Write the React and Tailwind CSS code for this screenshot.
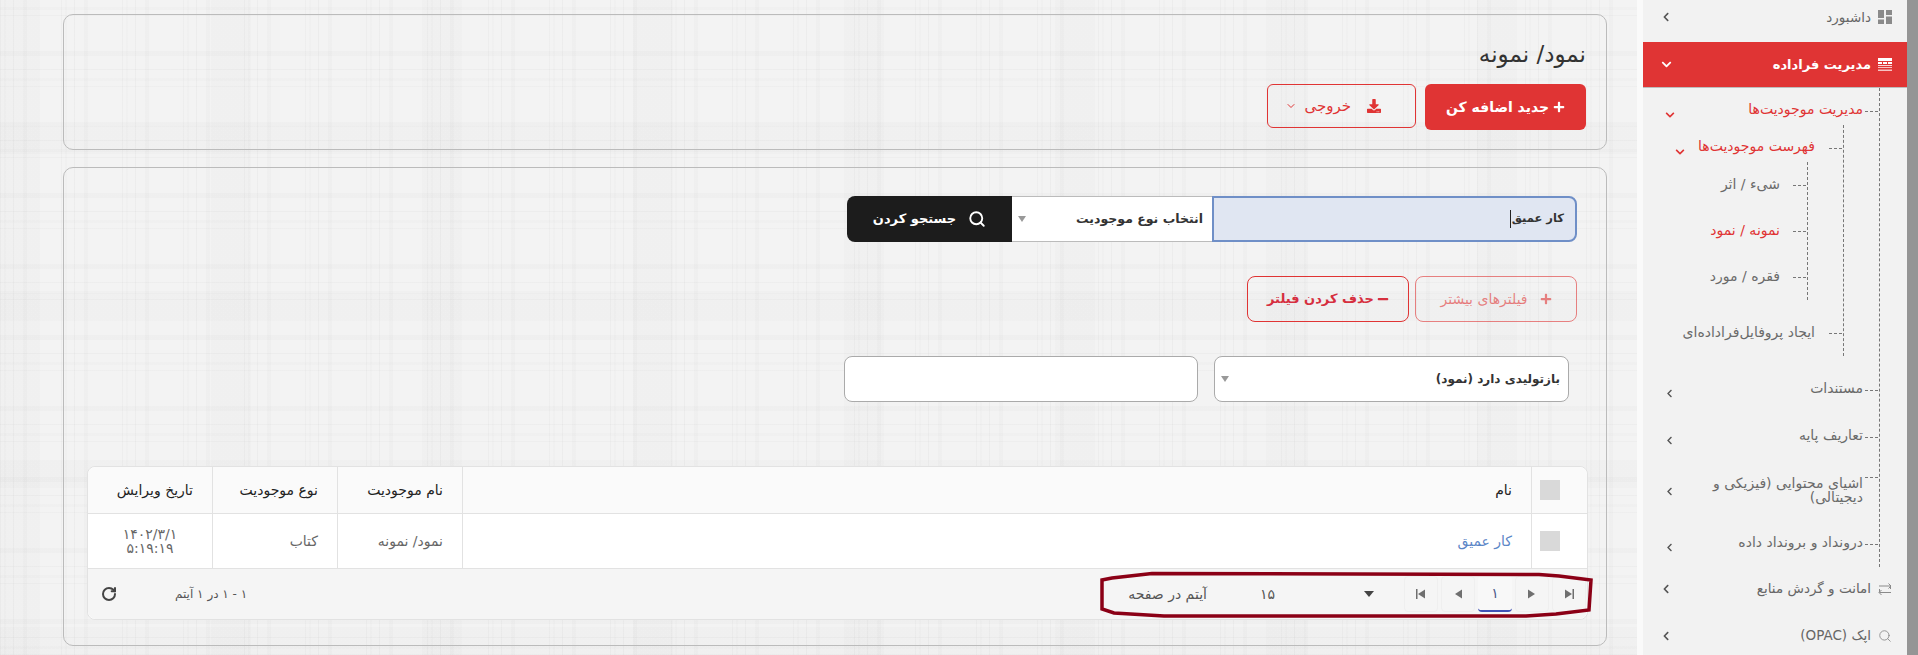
import React from "react";
import { FaPlus, FaMinus, FaDownload, FaChevronLeft, FaChevronDown } from "react-icons/fa";
import { ChevronDown, RotateCw, Search } from "lucide-react";

const Tri = ({ dir, bar, className = "" }) => (
  <svg width="12" height="12" viewBox="0 0 12 12" className={className}>
    {dir === "right" ? <path d="M2 1.5 L9 6 L2 10.5 Z" fill="#6f6f6f" /> : <path d="M10 1.5 L3 6 L10 10.5 Z" fill="#6f6f6f" />}
    {bar && <rect x={dir === "right" ? 9.5 : 1} y="1" width="1.5" height="10" fill="#6f6f6f" />}
  </svg>
);

const DashIcon = () => (
  <svg width="14" height="14" viewBox="0 0 14 14" fill="#8a8a8a">
    <rect x="0" y="0" width="6" height="8" />
    <rect x="8" y="0" width="6" height="5" />
    <rect x="0" y="9.5" width="6" height="4.5" />
    <rect x="8" y="6.5" width="6" height="7.5" />
  </svg>
);

const GridIcon = () => (
  <svg width="14" height="13" viewBox="0 0 14 13" fill="#fff">
    <rect x="0" y="0" width="14" height="3" />
    <rect x="0" y="4" width="4" height="2" />
    <rect x="5" y="4" width="4" height="2" />
    <rect x="10" y="4" width="4" height="2" />
    <rect x="0" y="7" width="14" height="1" opacity="0.8" />
    <rect x="0" y="9" width="14" height="1" opacity="0.7" />
    <rect x="0" y="11.5" width="14" height="1.5" opacity="0.7" />
  </svg>
);

const SwapIcon = () => (
  <svg width="14" height="14" viewBox="0 0 14 14" fill="none" stroke="#8a8a8a" strokeWidth="1">
    <path d="M1 4 H12.5 V7 M10.5 1.5 L13 4 L10.5 6.5" />
    <path d="M13 10.5 H1.5 V7 M3.5 8 L1 10.5 L3.5 13" />
  </svg>
);

const Top = ({ icon, label, active, className = "" }) => (
  <div className={`shrink-0 flex items-center pr-[15px] pl-[18px] ${active ? "h-[46px] bg-[#e03434] text-white font-bold border-b border-[#bdbdbd]" : "h-[47px] text-[#666]"} ${className}`}>
    <span className="w-[14px] flex justify-center shrink-0">{icon}</span>
    <span className={`mr-[7px] ${active ? "text-[13px]" : "text-[13.5px]"}`}>{label}</span>
    <span className={`mr-auto ${active ? "text-white" : "text-[#555]"}`}>
      {active ? <FaChevronDown size={11} /> : <FaChevronLeft size={10} />}
    </span>
  </div>
);

const Dash = () => <span className="w-[13px] shrink-0 border-t border-dashed border-[#777] mt-[1px] mr-[1px]" />;

const Row = ({ label, h = "h-[47px]", red, chevron, open, pl = "pl-[22px]", mt, lines, gap = "mr-[2px]" }) => (
  <div className={`shrink-0 flex items-center ${h} ${pl} ${mt || ""}`}>
    <span className={`flex items-center ${lines ? "self-start mt-[16px]" : "self-center"}`}>
      <Dash />
    </span>
    <span className={`${gap} text-[14px] leading-[14px] whitespace-nowrap ${lines ? "self-start mt-[16px] !whitespace-normal w-[165px]" : "-mt-[3px]"} ${red ? "text-[#e03434]" : "text-[#6a6a6a]"}`}>{label}</span>
    {chevron && (
      <span className={`mr-auto ${lines ? "mt-[2px]" : "mt-[8px]"} ${open ? "text-[#e03434]" : "text-[#555]"}`}>
        {open ? <FaChevronDown size={10} /> : <FaChevronLeft size={9} />}
      </span>
    )}
  </div>
);

const Sidebar = () => (
  <aside className="w-[264px] shrink-0 bg-[#f2f2f2] flex flex-col">
    <Top icon={<DashIcon />} label="داشبورد" className="!h-[42px] pb-[8px]" />
    <Top active icon={<GridIcon />} label="مدیریت فراداده" />
    <div className="shrink-0 mr-[27px] border-r border-dashed border-[#777] h-[479px]">
      <Row label="مدیریت موجودیت‌ها" h="h-[37px] pt-[8px]" red chevron open />
      <div className="mr-[35px] border-r border-dashed border-[#777] h-[231px]">
        <Row label="فهرست موجودیت‌ها" h="h-[37px] pt-[8px]" red chevron open pl="pl-[32px]" gap="mr-[14px]" />
        <div className="mr-[35px] border-r border-dashed border-[#777] h-[138px]">
          <Row label="شیء / اثر" h="h-[46px]" gap="mr-[13px]" />
          <Row label="نمونه / نمود" h="h-[46px]" red gap="mr-[13px]" />
          <Row label="فقره / مورد" h="h-[46px]" gap="mr-[13px]" />
        </div>
        <Row label="ایجاد پروفایل‌فراداده‌ای" h="h-[46px]" mt="mt-[10px]" gap="mr-[14px]" />
      </div>
      <Row label="مستندات" mt="mt-[10px]" chevron />
      <Row label="تعاریف پایه" chevron />
      <Row label="اشیای محتوایی (فیزیکی و دیجیتالی)" h="h-[60px]" chevron lines />
      <Row label="درونداد و برونداد داده" h="h-[47px]" chevron />
    </div>
    <Top icon={<SwapIcon />} label="امانت و گردش منابع" className="mt-[-2px]" />
    <Top icon={<Search size={14} color="#8a8a8a" strokeWidth={1.5} />} label="اپک (OPAC)" />
  </aside>
);

const Header = ({ children }) => (
  <div className="flex items-center pr-[19px] text-[14px] text-[#222] border-l border-[#e2e2e2] last:border-l-0">{children}</div>
);

const cols = "grid grid-cols-[56px_1fr_125px_125px_124px]";

const Pager = ({ children, active }) => (
  <div className={`w-[34px] h-[36px] rounded-[4px] flex items-center justify-center text-[14px] text-[#4d5a8a] ${active ? "bg-[#f8f8f8] border-b-[2px] border-[#3f51b5]" : "border border-[#efefef]"}`}>{children}</div>
);

const Table = () => (
  <div className="mt-[64px] mr-[-11px] w-[1501px] border border-[#e2e2e2] rounded-[8px] bg-white">
    <div className={`${cols} h-[47px] bg-[#fafafa] border-b border-[#e2e2e2] rounded-t-[8px]`}>
      <div className="flex items-center justify-center border-l border-[#e2e2e2]"><span className="w-[20px] h-[20px] bg-[#d9d9d9] mr-[20px]" /></div>
      <Header>نام</Header>
      <Header>نام موجودیت</Header>
      <Header>نوع موجودیت</Header>
      <Header>تاریخ ویرایش</Header>
    </div>
    <div className={`${cols} h-[55px] border-b border-[#e2e2e2] text-[14px] text-[#666]`}>
      <div className="flex items-center justify-center border-l border-[#e2e2e2]"><span className="w-[20px] h-[20px] bg-[#d9d9d9] mr-[20px]" /></div>
      <div className="flex items-center pr-[19px] text-[#5b86c7] border-l border-[#e2e2e2]">کار عمیق</div>
      <div className="flex items-center pr-[19px] border-l border-[#e2e2e2]">نمود/ نمونه</div>
      <div className="flex items-center pr-[19px] border-l border-[#e2e2e2]">کتاب</div>
      <div className="flex items-center justify-center text-center leading-[14px]">۱۴۰۲/۳/۱<br />۵:۱۹:۱۹</div>
    </div>
    <div className="relative h-[50px] bg-[#f5f5f5] rounded-b-[8px] flex items-center pr-[1px] pl-[13px] text-[14px] text-[#555]">
      <div className="flex items-center gap-[3px]">
        <Pager><Tri dir="right" bar /></Pager>
        <Pager><Tri dir="right" /></Pager>
        <Pager active>۱</Pager>
        <Pager><Tri dir="left" /></Pager>
        <Pager><Tri dir="left" bar /></Pager>
      </div>
      <svg width="12" height="8" viewBox="0 0 12 8" className="mr-[29px]"><path d="M1 1 H11 L6 7 Z" fill="#444" /></svg>
      <span className="mr-[88px]">۱۵</span>
      <span className="mr-[53px]">آیتم در صفحه</span>
      <span className="mr-auto text-[12px]">۱ - ۱ در ۱ آیتم</span>
      <RotateCw size={16} strokeWidth={3} color="#444" className="mr-[58px]" />
      <svg width="496" height="48" viewBox="0 0 496 48" fill="none" className="absolute right-[-8px] top-[2px]">
        <path d="M53 2.5 L13 7 L3 9 L3 38 L15 42 L65 45 L427 45 L457 43 L490 39 L492 9 L460 5 L440 3.5 Z" stroke="#8b0016" strokeWidth="3.5" />
      </svg>
    </div>
  </div>
);

export default function App() {
  return (
    <div dir="rtl" className="w-[1918px] h-[655px] overflow-hidden flex bg-[#f2f2f2] font-['DejaVu_Sans',sans-serif]">
      <div className="w-[11px] shrink-0 bg-[#959595]" />
      <Sidebar />
      <div className="w-[6px] shrink-0 bg-[#fafafa]" />
      <main className="flex-1 pr-[30px] pl-[63px] pt-[14px] flex flex-col gap-[17px] bg-[#f3f3f3] [background-image:repeating-linear-gradient(90deg,rgba(0,0,0,0.022)_0_1px,transparent_1px_4px,rgba(0,0,0,0.012)_4px_6px,transparent_6px_13px,rgba(0,0,0,0.026)_13px_14px,transparent_14px_23px,rgba(0,0,0,0.014)_23px_27px,transparent_27px_61px),repeating-linear-gradient(0deg,rgba(0,0,0,0.02)_0_1px,transparent_1px_6px,rgba(0,0,0,0.012)_6px_9px,transparent_9px_17px,rgba(0,0,0,0.024)_17px_18px,transparent_18px_31px,rgba(0,0,0,0.014)_31px_36px,transparent_36px_71px),repeating-linear-gradient(90deg,rgba(0,0,0,0.012)_0_40px,transparent_40px_211px),repeating-linear-gradient(0deg,rgba(0,0,0,0.012)_0_28px,transparent_28px_167px)]">
        <section className="shrink-0 h-[136px] border border-[#bbb] rounded-[10px] pr-[20px] pt-[22px]">
          <h1 className="text-[23px] leading-[34px] text-[#333] font-normal">نمود/ نمونه</h1>
          <div className="mt-[13px] flex items-start gap-[9px]">
            <button className="w-[161px] h-[46px] rounded-[6px] bg-[#e03434] text-white text-[14px] font-bold flex items-center justify-center gap-[4px]"><FaPlus size={12} />جدید اضافه کن</button>
            <button className="w-[149px] h-[44px] rounded-[6px] border border-[#e03434] text-[#e03434] text-[15px] flex items-center justify-start pr-[34px]">
              <FaDownload size={14} />
              <span className="mr-[16px]">خروجی</span>
              <ChevronDown size={12} className="mr-[7px]" />
            </button>
          </div>
        </section>
        <section className="shrink-0 h-[479px] border border-[#bbb] rounded-[10px] pr-[29px] pt-[28px]">
          <div className="flex h-[46px] w-[730px]">
            <div className="w-[365px] bg-[#e0e6f2] border-2 border-[#6f8fc7] rounded-r-[8px] flex items-center pr-[11px] text-[11.5px] text-[#333] font-bold">کار عمیق<span className="inline-block w-px h-[18px] bg-[#222] mr-[1px]" /></div>
            <div className="w-[200px] bg-white border-y border-[#bbb] flex items-center pr-[9px] pl-[6px] text-[12.5px] text-[#333] font-bold">انتخاب نوع موجودیت
              <svg width="8" height="6" viewBox="0 0 8 6" className="mr-auto"><path d="M0 0 H8 L4 6 Z" fill="#999" /></svg>
            </div>
            <button className="w-[165px] bg-[#1c1c1c] text-white rounded-l-[8px] text-[13px] font-bold flex items-center justify-center gap-[12px]"><Search size={18} strokeWidth={2.5} /><span>جستجو کردن</span></button>
          </div>
          <div className="mt-[34px] flex gap-[6px]">
            <button className="w-[162px] h-[46px] rounded-[8px] border border-[#e03434]/60 text-[#e03434]/60 text-[14px] flex items-center justify-center gap-[12px]"><FaPlus size={12} />فیلترهای بیشتر</button>
            <button className="w-[162px] h-[46px] rounded-[8px] border border-[#e03434] text-[#d62f3f] text-[13px] font-bold flex items-center justify-center gap-[3px]"><FaMinus size={12} />حذف کردن فیلتر</button>
          </div>
          <div className="mt-[34px] mr-[8px] flex gap-[16px]">
            <div className="w-[355px] h-[46px] bg-white border border-[#aaa] rounded-[8px] flex items-center pr-[8px] pl-[6px] text-[12px] font-bold text-[#333]">بازتولیدی دارد (نمود)
              <svg width="8" height="6" viewBox="0 0 8 6" className="mr-auto"><path d="M0 0 H8 L4 6 Z" fill="#999" /></svg>
            </div>
            <div className="w-[354px] h-[46px] bg-white border border-[#aaa] rounded-[8px]" />
          </div>
          <Table />
        </section>
      </main>
    </div>
  );
}
